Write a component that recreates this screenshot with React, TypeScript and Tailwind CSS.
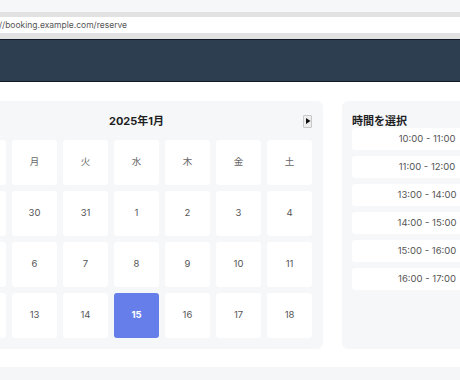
const weekDays = ['日', '月', '火', '水', '木', '金', '土'];

const weeks = [
  [29, 30, 31, 1, 2, 3, 4],
  [5, 6, 7, 8, 9, 10, 11],
  [12, 13, 14, 15, 16, 17, 18],
];

const slots = ['10:00 - 11:00', '11:00 - 12:00', '13:00 - 14:00', '14:00 - 15:00', '15:00 - 16:00', '16:00 - 17:00'];

const NavButton = ({ dir }: { dir: 'prev' | 'next' }) => (
  <button className="w-[9px] h-[13px] flex items-center justify-center border border-[#c8c8c8] bg-[#eeeeee] rounded-[1px]">
    <svg width="6" height="8" viewBox="0 0 6 8">
      {dir === 'next' ? <polygon points="1,1 5.5,4 1,7" fill="#111" /> : <polygon points="5,1 0.5,4 5,7" fill="#111" />}
    </svg>
  </button>
);

export default function App() {
  return (
    <div className="w-[460px] h-[380px] overflow-hidden bg-white font-['Inter','Noto_Sans_CJK_JP',sans-serif]">
      {/* Browser chrome */}
      <div className="h-[12px] bg-[#f6f7f9]" />
      <div className="bg-[#e2e2e2] pt-[5px] pb-[6px]">
        <div className="h-[16px] bg-white flex items-center text-[8.5px] text-[#555] -ml-[1px]">//booking.example.com/reserve</div>
      </div>
      <div className="h-[43px] bg-[#2d3e50] border-y border-[#111a26]" />

      {/* Content */}
      <div className="flex gap-[19px] -ml-[50px] mt-[19px]">
        <div className="w-[373px] shrink-0 bg-[#f6f7f9] rounded-md p-[11px]">
          <div className="h-[18px] mb-[10px] flex items-center justify-between">
            <NavButton dir="prev" />
            <div className="text-[11px] font-bold text-[#1f1f1f]">2025年1月</div>
            <NavButton dir="next" />
          </div>
          <div className="grid grid-cols-7 gap-[6px]">
            {weekDays.map((d) => (
              <div key={d} className="h-[45px] bg-white rounded-[3px] flex items-center justify-center text-[9.5px] text-[#666]">
                {d}
              </div>
            ))}
            {weeks.flat().map((n, i) => (
              <div
                key={i}
                className={
                  n === 15
                    ? 'h-[45px] bg-[#667eea] rounded-[3px] flex items-center justify-center text-[9.5px] font-bold text-white'
                    : 'h-[45px] bg-white rounded-[3px] flex items-center justify-center text-[9.5px] text-[#555]'
                }
              >
                {n}
              </div>
            ))}
          </div>
        </div>

        <div className="w-[170px] shrink-0 bg-[#f6f7f9] rounded-md px-[10px] pt-[11px]">
          <div className="h-[16px] text-[11px] font-bold text-[#1f1f1f] leading-[19px]">時間を選択</div>
          <div className="flex flex-col gap-[6px]">
            {slots.map((s) => (
              <div key={s} className="h-[22px] bg-white rounded-[3px] flex items-center justify-center text-[9.5px] text-[#555]">
                {s}
              </div>
            ))}
          </div>
        </div>
      </div>

      <div className="mt-[18px] h-[14px] bg-[#f5f6f8]" />
    </div>
  );
}
